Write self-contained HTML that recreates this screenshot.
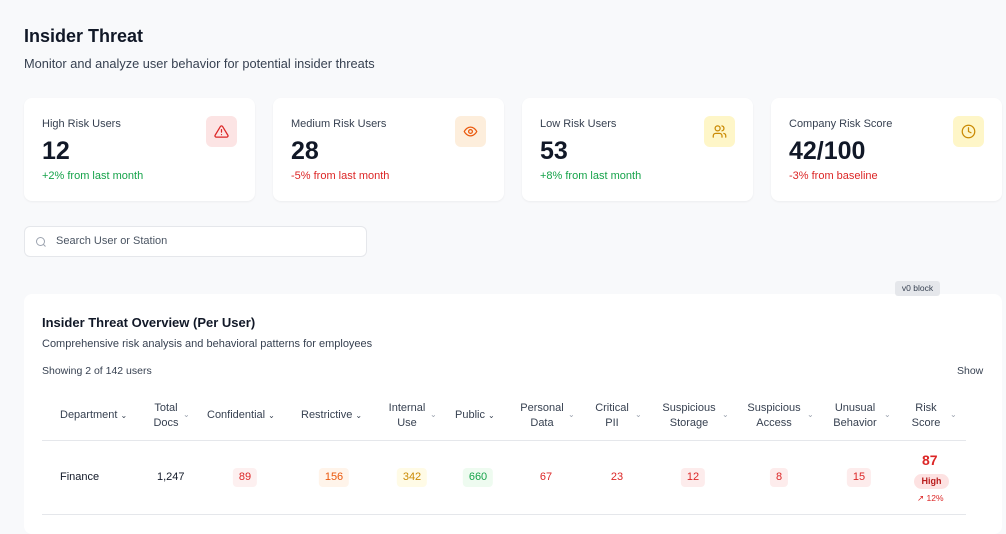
<!DOCTYPE html>
<html><head><meta charset="utf-8"><style>
*{box-sizing:border-box;margin:0;padding:0}
body{width:1006px;height:519px;overflow:hidden;background:#f8f9fb;font-family:"Liberation Sans",sans-serif;color:#111827;position:relative}
.a{position:absolute;white-space:nowrap}
.card{position:absolute;top:98px;width:231px;height:103px;background:#fff;border-radius:8px;box-shadow:0 1px 2px rgba(0,0,0,.05)}
.card .l{position:absolute;left:18px;top:20px;font-size:11px;color:#374151}
.card .v{position:absolute;left:18px;top:39px;font-size:25px;font-weight:bold;color:#111827}
.card .c{position:absolute;left:18px;top:72px;font-size:11px}
.card .ic{position:absolute;left:182px;top:18px;width:31px;height:31px;border-radius:6px;display:flex;align-items:center;justify-content:center}
.g{color:#16a34a}.r{color:#dc2626}
.h{position:absolute;font-size:11px;color:#374151;text-align:center;line-height:15px}
.ch{position:absolute;font-size:8px;color:#9ca3af}
.cell{position:absolute;top:468px;font-size:11px;transform:translateX(-50%);padding:2px 6px;border-radius:4px;line-height:15px}
</style></head><body>
<div class="a" style="left:24px;top:26px;font-size:18px;font-weight:bold">Insider Threat</div>
<div class="a" style="left:24px;top:56px;font-size:12.8px;color:#374151">Monitor and analyze user behavior for potential insider threats</div>

<div class="card" style="left:24px"><div class="l">High Risk Users</div><div class="v">12</div><div class="c g">+2% from last month</div>
<div class="ic" style="background:#fce4e4"><svg width="15" height="15" viewBox="0 0 24 24" fill="none" stroke="#dc2626" stroke-width="2" stroke-linecap="round" stroke-linejoin="round"><path d="M10.3 3.9 1.8 18a2 2 0 0 0 1.7 3h17a2 2 0 0 0 1.7-3L13.7 3.9a2 2 0 0 0-3.4 0z"/><path d="M12 9v4M12 17h.01"/></svg></div></div>
<div class="card" style="left:273px"><div class="l">Medium Risk Users</div><div class="v">28</div><div class="c r">-5% from last month</div>
<div class="ic" style="background:#fdeedc"><svg width="15" height="15" viewBox="0 0 24 24" fill="none" stroke="#ea580c" stroke-width="2"><path d="M2 12s3.5-7 10-7 10 7 10 7-3.5 7-10 7S2 12 2 12z"/><circle cx="12" cy="12" r="3"/></svg></div></div>
<div class="card" style="left:522px"><div class="l">Low Risk Users</div><div class="v">53</div><div class="c g">+8% from last month</div>
<div class="ic" style="background:#fef6c8"><svg width="15" height="15" viewBox="0 0 24 24" fill="none" stroke="#ca8a04" stroke-width="2" stroke-linecap="round"><path d="M16 21v-2a4 4 0 0 0-4-4H6a4 4 0 0 0-4 4v2"/><circle cx="9" cy="7" r="4"/><path d="M22 21v-2a4 4 0 0 0-3-3.9M16 3.1a4 4 0 0 1 0 7.8"/></svg></div></div>
<div class="card" style="left:771px"><div class="l">Company Risk Score</div><div class="v">42/100</div><div class="c r">-3% from baseline</div>
<div class="ic" style="background:#fef6c8"><svg width="15" height="15" viewBox="0 0 24 24" fill="none" stroke="#ca8a04" stroke-width="2" stroke-linecap="round"><circle cx="12" cy="12" r="10"/><path d="M12 6v6l4 2"/></svg></div></div>

<div class="a" style="left:24px;top:226px;width:343px;height:31px;background:#fff;border:1px solid #e5e7eb;border-radius:6px">
<svg style="position:absolute;left:10px;top:9px" width="12" height="12" viewBox="0 0 24 24" fill="none" stroke="#9ca3af" stroke-width="2"><circle cx="11" cy="11" r="8"/><path d="m21 21-4.3-4.3"/></svg>
<span style="position:absolute;left:31px;top:8px;font-size:11px;color:#4b5563">Search User or Station</span></div>

<div class="a" style="left:24px;top:294px;width:978px;height:240px;background:#fff;border-radius:8px"></div>
<div class="a" style="left:895px;top:281px;width:45px;height:15px;background:#e5e7eb;border-radius:3px;font-size:8.5px;color:#374151;text-align:center;line-height:15px">v0 block</div>
<div class="a" style="left:42px;top:315px;font-size:13px;font-weight:bold">Insider Threat Overview (Per User)</div>
<div class="a" style="left:42px;top:338px;font-size:11px;color:#374151">Comprehensive risk analysis and behavioral patterns for employees</div>
<div class="a" style="left:42px;top:365px;font-size:10.5px;color:#374151">Showing 2 of 142 users</div>
<div class="a" style="left:957px;top:365px;font-size:10.5px;color:#374151">Show</div>

<div class="h" style="left:60px;top:408px">Department <span style="font-size:8px">⌄</span></div>
<div class="h" style="left:146px;top:401px;width:40px">Total<br>Docs</div>
<div class="h" style="left:207px;top:408px">Confidential <span style="font-size:8px">⌄</span></div>
<div class="h" style="left:301px;top:408px">Restrictive <span style="font-size:8px">⌄</span></div>
<div class="h" style="left:385px;top:401px;width:44px">Internal<br>Use</div>
<div class="h" style="left:455px;top:408px">Public <span style="font-size:8px">⌄</span></div>
<div class="h" style="left:515px;top:401px;width:54px">Personal<br>Data</div>
<div class="h" style="left:590px;top:401px;width:44px">Critical<br>PII</div>
<div class="h" style="left:657px;top:401px;width:64px">Suspicious<br>Storage</div>
<div class="h" style="left:742px;top:401px;width:64px">Suspicious<br>Access</div>
<div class="h" style="left:828px;top:401px;width:54px">Unusual<br>Behavior</div>
<div class="h" style="left:906px;top:401px;width:40px">Risk<br>Score</div>
<div class="ch" style="left:183px;top:410px">⌄</div><div class="ch" style="left:430px;top:410px">⌄</div><div class="ch" style="left:568px;top:410px">⌄</div><div class="ch" style="left:635px;top:410px">⌄</div><div class="ch" style="left:722px;top:410px">⌄</div><div class="ch" style="left:807px;top:410px">⌄</div><div class="ch" style="left:884px;top:410px">⌄</div><div class="ch" style="left:950px;top:410px">⌄</div>
<div class="a" style="left:42px;top:440px;width:924px;height:1px;background:#e5e7eb"></div>
<div class="a" style="left:42px;top:514px;width:924px;height:1px;background:#e5e7eb"></div>

<div class="a" style="left:60px;top:471px;font-size:11px">Finance</div>
<div class="a" style="left:157px;top:471px;font-size:11px">1,247</div>
<div class="cell" style="left:245px;background:#fdf0f0;color:#dc2626">89</div>
<div class="cell" style="left:334px;background:#fff4ea;color:#ea580c">156</div>
<div class="cell" style="left:412px;background:#fffbe6;color:#ca8a04">342</div>
<div class="cell" style="left:478px;background:#eefbf0;color:#16a34a">660</div>
<div class="cell" style="left:546px;color:#dc2626">67</div>
<div class="cell" style="left:617px;color:#dc2626">23</div>
<div class="cell" style="left:693px;background:#fdecec;color:#dc2626">12</div>
<div class="cell" style="left:779px;background:#fdecec;color:#dc2626">8</div>
<div class="cell" style="left:859px;background:#fdecec;color:#dc2626">15</div>
<div class="a" style="left:922px;top:452px;font-size:14px;font-weight:bold;color:#dc2626">87</div>
<div class="a" style="left:914px;top:474px;width:35px;height:15px;background:#fde2e2;border-radius:8px;font-size:9px;color:#b91c1c;text-align:center;line-height:15px;font-weight:bold">High</div>
<div class="a" style="left:917px;top:493px;font-size:8.5px;color:#dc2626">↗ 12%</div>
</body></html>
